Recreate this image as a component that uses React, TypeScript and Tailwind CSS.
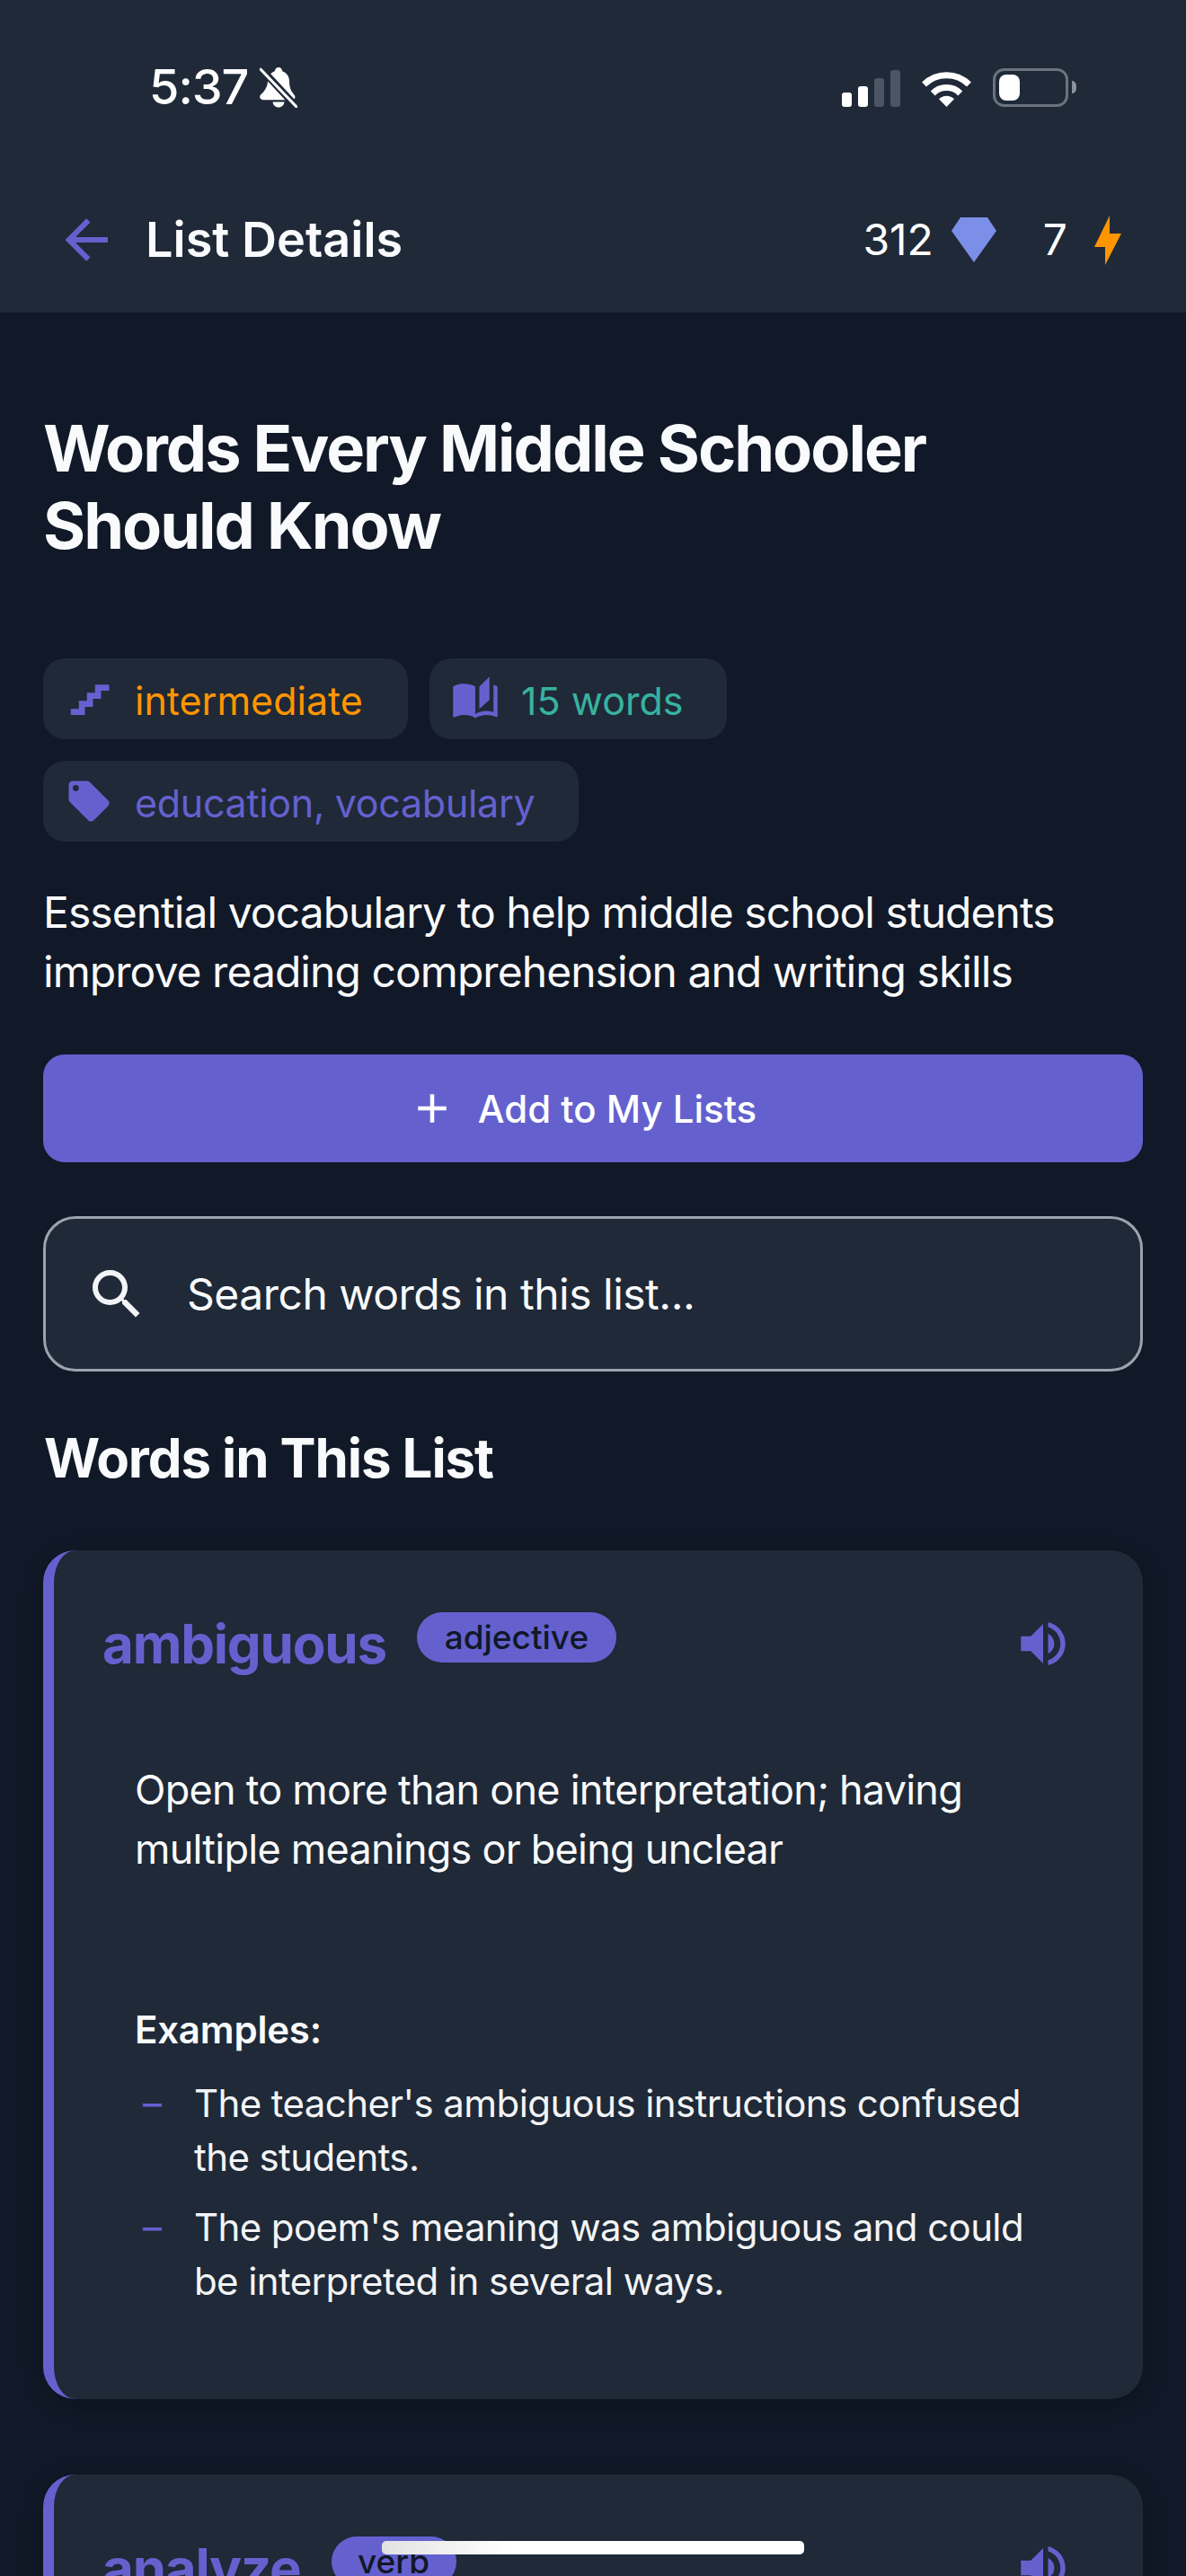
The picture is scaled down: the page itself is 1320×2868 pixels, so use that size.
import React from "react";

const FONT = "font-['Inter','Liberation_Sans',sans-serif]";

function Mdi({ d, className }: { d: string; className: string }) {
  return (
    <svg viewBox="0 0 24 24" className={className} fill="currentColor" aria-hidden="true">
      <path d={d} />
    </svg>
  );
}

const P = {
  arrow: "M20,11V13H8L13.5,18.5L12.08,19.92L4.16,12L12.08,4.08L13.5,5.5L8,11H20Z",
  stairs: "M15,5V9H11V13H7V17H3V20H10V16H14V12H18V8H22V5H15Z",
  book: "M19 1L14 6V17L19 12.5V1M21 5V18.5C19.9 18.15 18.7 18 17.5 18C15.8 18 13.35 18.65 12 19.5V6C10.55 4.9 8.45 4.5 6.5 4.5C4.55 4.5 2.45 4.9 1 6V20.65C1 20.9 1.25 21.15 1.5 21.15C1.6 21.15 1.65 21.1 1.75 21.1C3.1 20.45 5.05 20 6.5 20C8.45 20 10.55 20.4 12 21.5C13.35 20.65 15.8 20 17.5 20C19.15 20 20.85 20.3 22.25 21.05C22.35 21.1 22.4 21.1 22.5 21.1C22.75 21.1 23 20.85 23 20.6V6C22.4 5.55 21.75 5.25 21 5Z",
  tag: "M5.5,7A1.5,1.5 0 0,1 4,5.5A1.5,1.5 0 0,1 5.5,4A1.5,1.5 0 0,1 7,5.5A1.5,1.5 0 0,1 5.5,7M21.41,11.58L12.41,2.58C12.05,2.22 11.55,2 11,2H4C2.89,2 2,2.89 2,4V11C2,11.55 2.22,12.05 2.59,12.41L11.58,21.41C11.95,21.77 12.45,22 13,22C13.55,22 14.05,21.77 14.41,21.41L21.41,14.41C21.78,14.05 22,13.55 22,13C22,12.44 21.77,11.94 21.41,11.58Z",
  volume: "M14,3.23V5.29C16.89,6.15 19,8.83 19,12C19,15.17 16.89,17.84 14,18.7V20.77C18,19.86 21,16.28 21,12C21,7.72 18,4.14 14,3.23M16.5,12C16.5,10.23 15.5,8.71 14,7.97V16C15.5,15.29 16.5,13.76 16.5,12M3,9V15H7L12,20V4L7,9H3Z",
  magnify: "M9.5,3A6.5,6.5 0 0,1 16,9.5C16,11.11 15.41,12.59 14.44,13.73L14.71,14H15.5L20.5,19L19,20.5L14,15.5V14.71L13.73,14.44C12.59,15.41 11.11,16 9.5,16A6.5,6.5 0 0,1 3,9.5A6.5,6.5 0 0,1 9.5,3M9.5,5C7,5 5,7 5,9.5C5,12 7,14 9.5,14C12,14 14,12 14,9.5C14,7 12,5 9.5,5Z",
  plus: "M19,13H13V19H11V13H5V11H11V5H13V11H19V13Z",
};

function BellSlash() {
  return (
    <svg viewBox="0 0 42 45" className="w-[42px] h-[45px] ml-[13px]" aria-hidden="true">
      <path
        d="M21 0c2.400 0 4 1.800 4.200 4.200 5 1.600 7.800 6 7.800 11.300 0 6.200 1.400 10.600 4.800 14.200 2 2.100 2.200 4.300.6 5.600-1 .8-2.200.9-3.400.9H5c-1.600 0-3-.2-4-1.200-1.300-1.400-1-3.400.8-5.200C5.600 26.200 8.500 22 9 16 9.400 9.800 12 6 16.800 4.200 17 1.800 18.600 0 21 0z"
        fill="#ffffff"
      />
      <path d="M14.500 38.500h13c-.5 3.800-3.100 6-6.500 6s-6-2.200-6.500-6z" fill="#ffffff" />
      <path d="M1 1 L41 44" stroke="#1f2937" strokeWidth="8" />
      <path d="M1 2 L41 44" stroke="#ffffff" strokeWidth="3" strokeLinecap="round" />
    </svg>
  );
}

function Signal() {
  return (
    <svg viewBox="0 0 65 41" className="w-[65px] h-[41px]" aria-hidden="true">
      <rect x="0" y="25" width="11" height="16" rx="3" fill="#ffffff" />
      <rect x="18" y="18" width="11" height="23" rx="3" fill="#ffffff" />
      <rect x="36" y="9" width="11" height="32" rx="3" fill="#4b5563" />
      <rect x="54" y="0" width="11" height="41" rx="3" fill="#4b5563" />
    </svg>
  );
}

function Wifi() {
  return (
    <svg viewBox="0 0 57 42" className="w-[57px] h-[42px] ml-[23px]" fill="none" aria-hidden="true">
      <path d="M3.500 17 A35.500 35.500 0 0 1 53.500 17" stroke="#ffffff" strokeWidth="7" />
      <path d="M13.200 27 A21.500 21.500 0 0 1 43.800 27" stroke="#ffffff" strokeWidth="7" />
      <path d="M28.500 42 L20 33.300 A12 12 0 0 1 37 33.300 Z" fill="#ffffff" />
    </svg>
  );
}

function Battery() {
  return (
    <svg viewBox="0 0 93 43" className="w-[93px] h-[43px] ml-[23px]" aria-hidden="true">
      <rect x="1.500" y="1.500" width="81" height="40" rx="11" fill="none" stroke="#6b7280" strokeWidth="3" />
      <rect x="7" y="7" width="23" height="29" rx="8" fill="#ffffff" />
      <path d="M88 14c3 0 5 2 5 7s-2 7-5 7z" fill="#8b929c" />
    </svg>
  );
}

function Pill({ icon, text, color, width }: { icon: string; text: string; color: string; width: string }) {
  return (
    <div className={`flex items-center h-[90px] rounded-[24px] bg-[#1f2937] pl-[24px] ${width}`}>
      <Mdi d={icon} className="w-[54px] h-[54px] text-[#6461cf] shrink-0" />
      <span className={`ml-[24px] mt-[4px] text-[43px] leading-[60px] ${color}`}>{text}</span>
    </div>
  );
}

function WordHeader({ word, type, pillClass }: { word: string; type: string; pillClass: string }) {
  return (
    <div className="flex items-start pr-[78px]">
      <span className="text-[60px] leading-[84px] font-bold tracking-[-1.2px] text-[#6461cf]">{word}</span>
      <span
        className={`mt-[7px] ml-[34px] h-[56px] rounded-full bg-[#6461cf] text-center text-[#111827] text-[37px] leading-[56px] font-medium ${pillClass}`}
      >
        {type}
      </span>
      <Mdi d={P.volume} className="ml-auto mt-[9px] w-[66px] h-[66px] text-[#6461cf]" />
    </div>
  );
}

function Example({ text }: { text: string }) {
  return (
    <li className="flex">
      <span className="w-[66px] pl-[9px] text-[#6461cf] shrink-0">–</span>
      <span className="w-[940px]">{text}</span>
    </li>
  );
}

export default function App() {
  return (
    <div className={`relative w-[1320px] h-[2868px] overflow-hidden bg-[#111827] text-[#f9fafb] ${FONT}`}>
      <header className="h-[348px] bg-[#1f2937]">
        <div className="flex items-center justify-between h-[194px] pl-[166px] pr-[122px]">
          <div className="flex items-center">
            <span className="text-[54px] leading-[60px] font-medium tracking-[-1px] text-white">5:37</span>
            <BellSlash />
          </div>
          <div className="flex items-end">
            <Signal />
            <Wifi />
            <Battery />
          </div>
        </div>
        <div className="flex items-center h-[146px] pl-[60px] pr-[72px]">
          <Mdi d={P.arrow} className="w-[72px] h-[72px] text-[#6461cf]" />
          <h1 className="ml-[30px] text-[54px] leading-[72px] font-semibold">List Details</h1>
          <span className="ml-auto text-[48px] leading-[60px] text-white">312</span>
          <svg viewBox="0 0 50 50" className="ml-[20px] w-[50px] h-[50px]" aria-hidden="true">
            <polygon points="10,0 40,0 50,15 25,50 0,15" fill="#7b8fe8" />
          </svg>
          <span className="ml-[52px] text-[48px] leading-[60px] text-white">7</span>
          <svg viewBox="0 0 30 55" className="ml-[30px] w-[30px] h-[55px]" aria-hidden="true">
            <polygon points="17,0 0,35 12,35 12,55 30,20 17,20" fill="#ff9500" />
          </svg>
        </div>
      </header>

      <main className="px-[48px] pt-[108px]">
        <h2 className="text-[72px] leading-[86px] font-bold tracking-[-2px]">
          Words Every Middle Schooler
          <br />
          Should Know
        </h2>

        <div className="mt-[105px] flex flex-wrap gap-[24px]">
          <Pill icon={P.stairs} text="intermediate" color="text-[#ff9500]" width="w-[406px]" />
          <Pill icon={P.book} text="15 words" color="text-[#38b2a0]" width="w-[331px]" />
          <Pill icon={P.tag} text="education, vocabulary" color="text-[#6461cf] tracking-[-0.3px]" width="w-[596px]" />
        </div>

        <p className="mt-[46px] text-[48px] leading-[66px] tracking-[-0.95px]">
          Essential vocabulary to help middle school students
          <br />
          improve reading comprehension and writing skills
        </p>

        <button className="mt-[59px] flex items-center justify-center w-full h-[120px] rounded-[24px] bg-[#6461cf] text-white text-[42px] font-medium">
          <Mdi d={P.plus} className="w-[54px] h-[54px]" />
          <span className="ml-[24px] mr-[24px]">Add to My Lists</span>
        </button>

        <div className="mt-[60px] flex items-center h-[173px] rounded-[36px] border-[3px] border-[#9ca3af] bg-[#1f2937] pl-[43px]">
          <Mdi d={P.magnify} className="w-[72px] h-[72px] text-[#f3f4f6]" />
          <span className="ml-[42px] text-[48px] leading-[66px] tracking-[-0.5px]">Search words in this list...</span>
        </div>

        <h3 className="mt-[60px] ml-[1px] text-[60px] leading-[72px] font-bold tracking-[-1.1px]">Words in This List</h3>

        <article className="mt-[67px] h-[945px] rounded-[36px] border-l-[12px] border-[#6461cf] bg-[#1f2937] pt-[62px] pl-[54px] shadow-[0_6px_24px_rgba(0,0,0,0.25)]">
          <WordHeader word="ambiguous" type="adjective" pillClass="w-[222px]" />
          <p className="mt-[88px] ml-[36px] text-[45px] leading-[66px] tracking-[-0.75px]">
            Open to more than one interpretation; having
            <br />
            multiple meanings or being unclear
          </p>
          <h4 className="mt-[138px] ml-[36px] text-[42px] leading-[60px] font-semibold tracking-[-0.2px]">Examples:</h4>
          <ul className="mt-[22px] ml-[36px] flex flex-col gap-[18px] text-[42px] leading-[60px] tracking-[-0.6px] text-[#f3f4f6]">
            <Example text="The teacher's ambiguous instructions confused the students." />
            <Example text="The poem's meaning was ambiguous and could be interpreted in several ways." />
          </ul>
        </article>

        <article className="mt-[84px] h-[600px] rounded-[36px] border-l-[12px] border-[#6461cf] bg-[#1f2937] pt-[62px] pl-[54px] shadow-[0_6px_24px_rgba(0,0,0,0.25)]">
          <WordHeader word="analyze" type="verb" pillClass="w-[139px]" />
        </article>
      </main>

      <div className="absolute left-[425px] top-[2829px] w-[470px] h-[15px] rounded-[5px] bg-linear-to-r from-[#e2e2e2] to-white to-[30%]" />
    </div>
  );
}
